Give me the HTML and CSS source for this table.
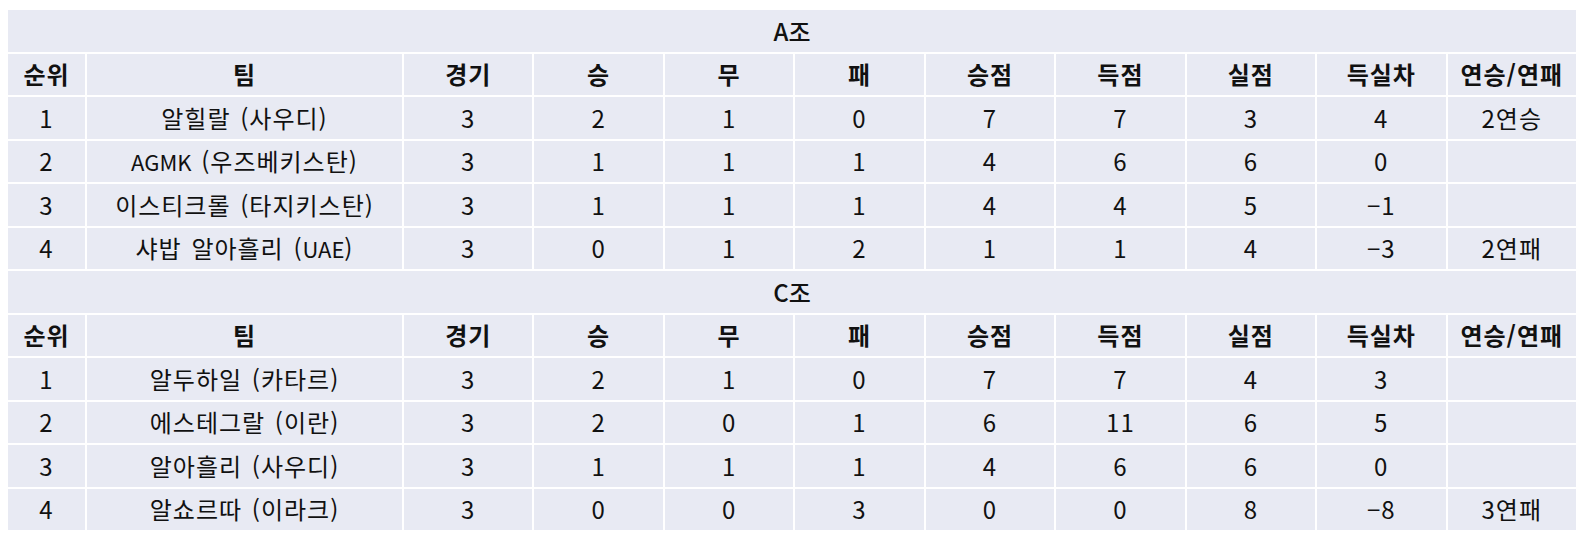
FILE: index.html
```html
<!DOCTYPE html>
<html lang="ko">
<head>
<meta charset="utf-8">
<title>순위표</title>
<link rel="stylesheet" href="styles.css">
</head>
<body>
<table class="standings">
  <colgroup>
    <col class="c-rank">
    <col class="c-team">
    <col span="9">
  </colgroup>
  <tbody>
    <tr><th class="group" colspan="11">A조</th></tr>
    <tr class="head"><th>순위</th><th>팀</th><th>경기</th><th>승</th><th>무</th><th>패</th><th>승점</th><th>득점</th><th>실점</th><th>득실차</th><th>연승/연패</th></tr>
    <tr><td>1</td><td>알힐랄 (사우디)</td><td>3</td><td>2</td><td>1</td><td>0</td><td>7</td><td>7</td><td>3</td><td>4</td><td>2연승</td></tr>
    <tr><td>2</td><td><span class="abbr">AGMK</span> (우즈베키스탄)</td><td>3</td><td>1</td><td>1</td><td>1</td><td>4</td><td>6</td><td>6</td><td>0</td><td></td></tr>
    <tr><td>3</td><td>이스티크롤 (타지키스탄)</td><td>3</td><td>1</td><td>1</td><td>1</td><td>4</td><td>4</td><td>5</td><td>−1</td><td></td></tr>
    <tr><td>4</td><td>샤밥 알아흘리 (<span class="abbr">UAE</span>)</td><td>3</td><td>0</td><td>1</td><td>2</td><td>1</td><td>1</td><td>4</td><td>−3</td><td>2연패</td></tr>
    <tr><th class="group" colspan="11">C조</th></tr>
    <tr class="head"><th>순위</th><th>팀</th><th>경기</th><th>승</th><th>무</th><th>패</th><th>승점</th><th>득점</th><th>실점</th><th>득실차</th><th>연승/연패</th></tr>
    <tr><td>1</td><td>알두하일 (카타르)</td><td>3</td><td>2</td><td>1</td><td>0</td><td>7</td><td>7</td><td>4</td><td>3</td><td></td></tr>
    <tr><td>2</td><td>에스테그랄 (이란)</td><td>3</td><td>2</td><td>0</td><td>1</td><td>6</td><td>11</td><td>6</td><td>5</td><td></td></tr>
    <tr><td>3</td><td>알아흘리 (사우디)</td><td>3</td><td>1</td><td>1</td><td>1</td><td>4</td><td>6</td><td>6</td><td>0</td><td></td></tr>
    <tr><td>4</td><td>알쇼르따 (이라크)</td><td>3</td><td>0</td><td>0</td><td>3</td><td>0</td><td>0</td><td>8</td><td>−8</td><td>3연패</td></tr>
  </tbody>
</table>
</body>
</html>
```

FILE: styles.css
```css
html, body {
  background: #ffffff;
}
body {
  margin: 8px 6px;
  font-family: "Noto Sans CJK KR", "Liberation Sans", sans-serif;
  color: #111111;
}
.standings {
  width: 100%;
  table-layout: fixed;
  border-collapse: separate;
  border-spacing: 2px;
  font-size: 24px;
}
.c-rank { width: 77px; }
.c-team { width: 315px; }
.standings th,
.standings td {
  background: #e8eaf3;
  height: 41.5px;
  padding: 0;
  text-align: center;
  vertical-align: middle;
  line-height: 26px;
  white-space: nowrap;
}
.standings td {
  font-weight: 400;
  letter-spacing: 1px;
  word-spacing: 2px;
}
.standings .abbr {
  font-size: 22px;
  letter-spacing: 0;
}
.standings .head th {
  font-weight: 700;
  letter-spacing: 1px;
}
.standings th.group {
  font-weight: 500;
}
```
